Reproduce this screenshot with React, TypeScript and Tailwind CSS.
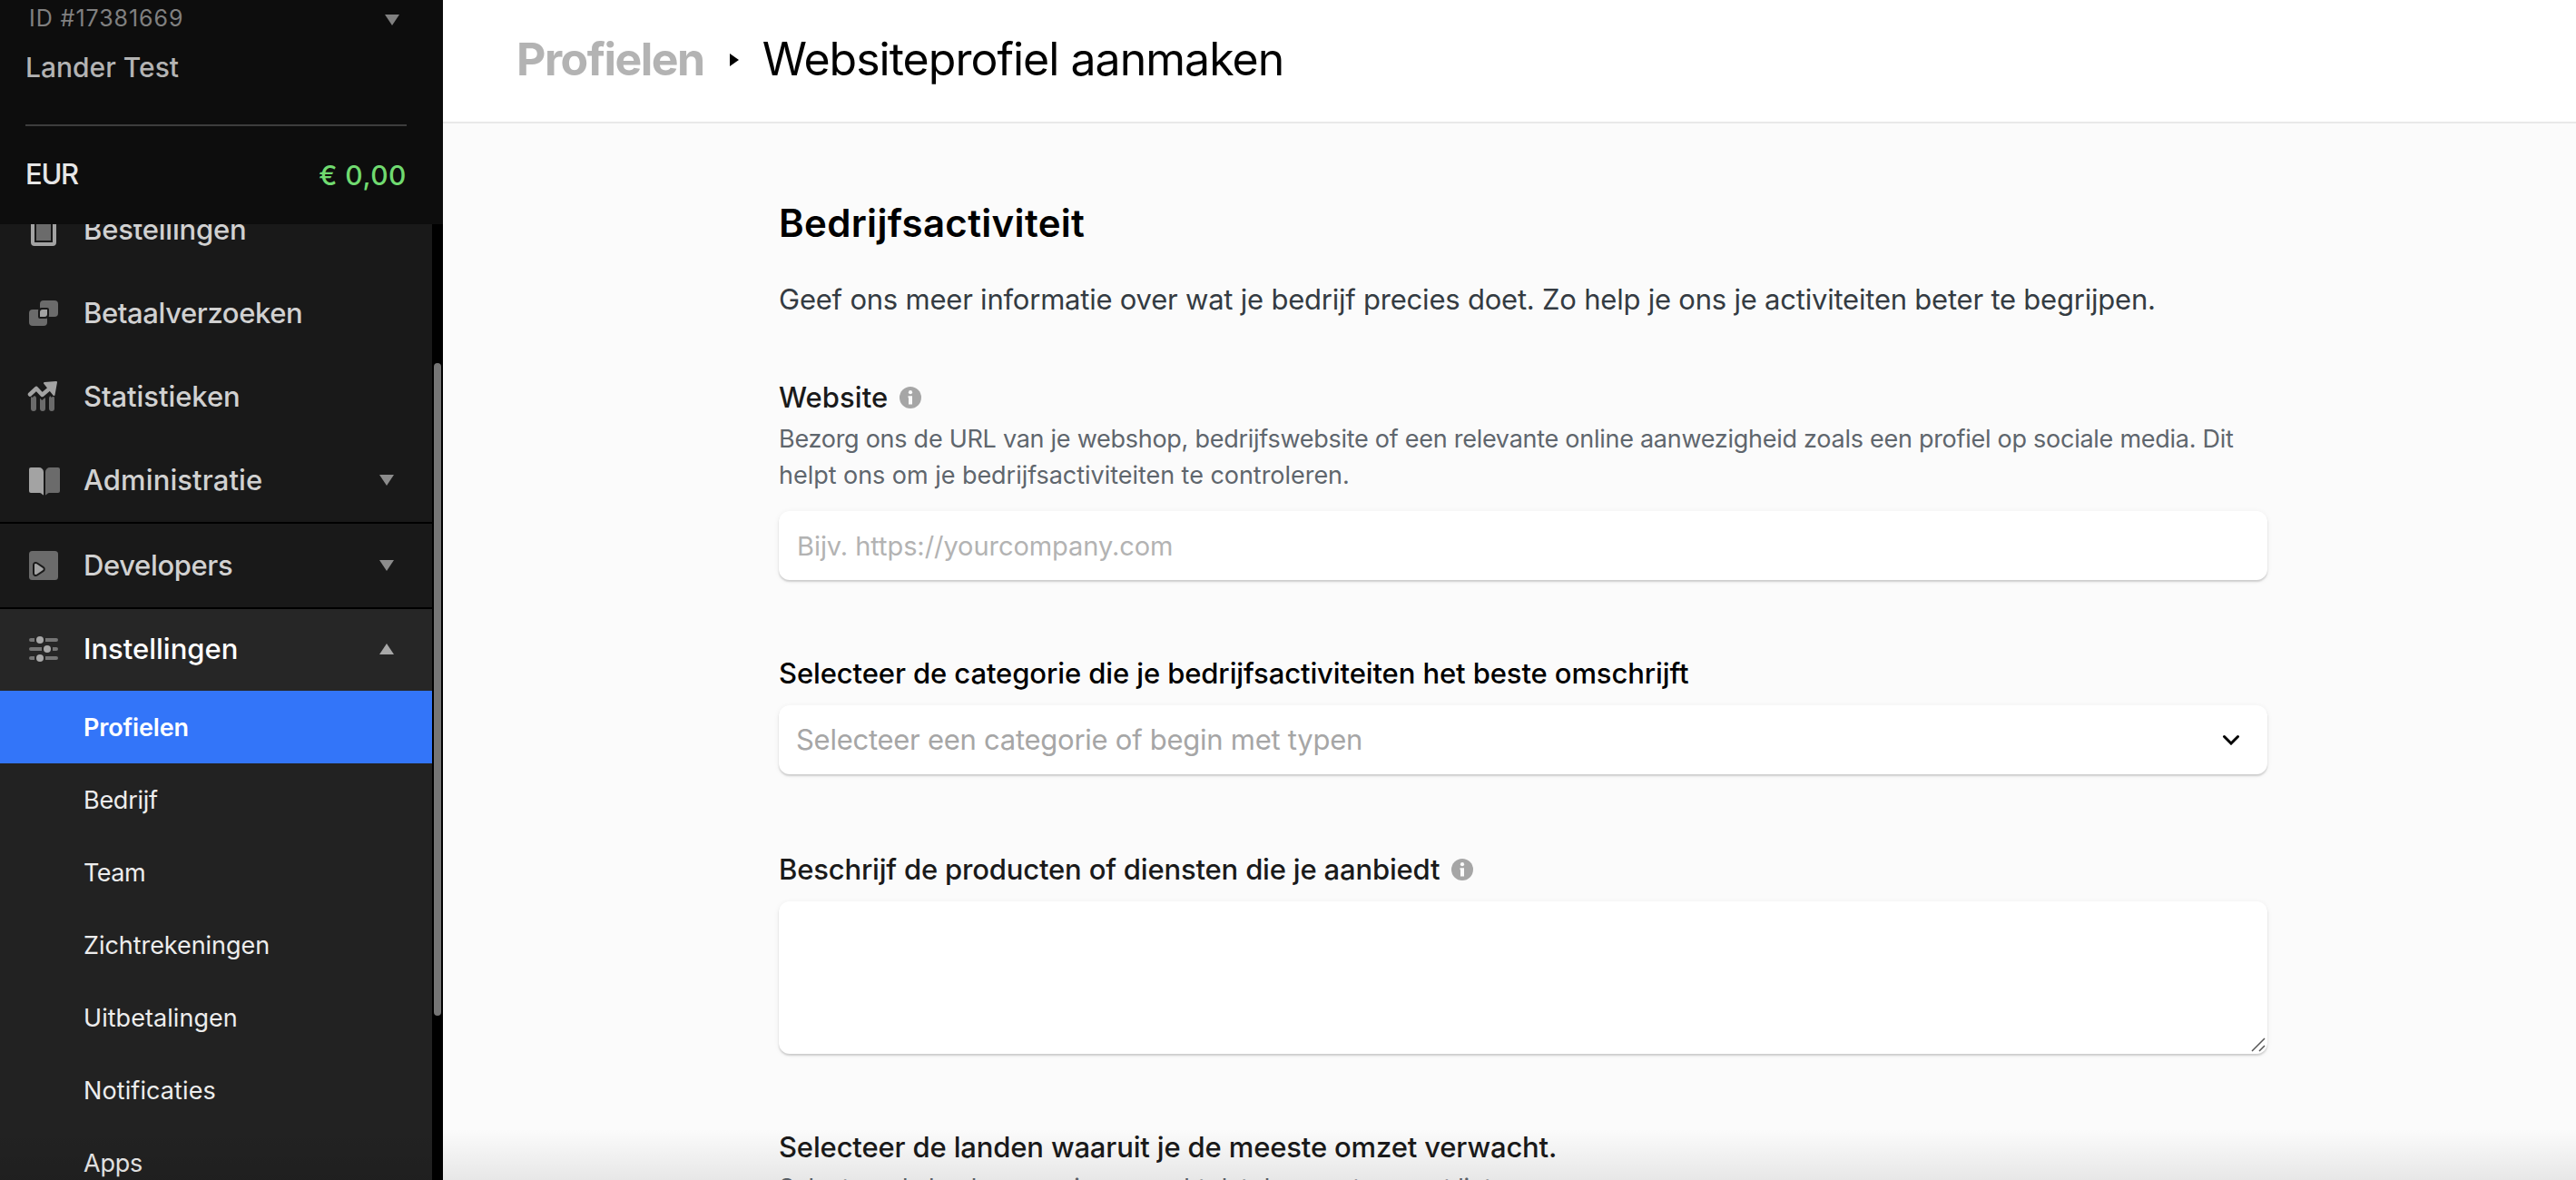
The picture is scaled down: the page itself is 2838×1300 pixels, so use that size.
import React, { FC, ReactNode } from "react";
import clsx from "clsx";

interface NavItem {
  label: string;
  tracking: string;
  icon: ReactNode;
  arrow?: "up" | "down";
}

interface SubItem {
  label: string;
  tracking: string;
  active?: boolean;
}

const OrdersIcon: FC = () => (
  <svg width="40" height="40" viewBox="0 0 40 40" className="shrink-0">
    <rect x="6" y="6" width="24" height="30" rx="2" fill="none" stroke="#a3a3a3" strokeWidth="4" />
    <rect x="10" y="10" width="16" height="22" fill="#6b6b6b" />
  </svg>
);

const RequestsIcon: FC = () => (
  <svg width="40" height="40" viewBox="0 0 40 40" className="shrink-0">
    <rect x="14" y="6" width="20" height="18" rx="4" fill="#6b6b6b" />
    <rect x="2" y="16" width="20" height="18" rx="4" fill="#6b6b6b" />
    <path d="M12 24v-6a4 4 0 0 1 4-4h6a2 2 0 0 1 2 2v6a4 4 0 0 1-4 4h-6a2 2 0 0 1-2-2z" fill="#191919" />
    <path d="M14 24v-5a3 3 0 0 1 3-3h5v5a3 3 0 0 1-3 3z" fill="#a3a3a3" />
  </svg>
);

const StatsIcon: FC = () => (
  <svg width="40" height="40" viewBox="0 0 40 40" className="shrink-0">
    <path d="M7 22v11M17 23v10M27 22v11" stroke="#6b6b6b" strokeWidth="6" strokeLinecap="round" />
    <path d="M3 18l7-6.500 6.500 7L27 9.500l3 10" fill="none" stroke="#191919" strokeWidth="8" />
    <path d="M3 17.500l7-6.500 6.500 7L27 9" fill="none" stroke="#a3a3a3" strokeWidth="4.500" strokeLinecap="round" strokeLinejoin="round" />
    <path d="M19 5l13-1-2.500 14z" fill="#a3a3a3" stroke="#a3a3a3" strokeWidth="2" strokeLinejoin="round" />
  </svg>
);

const BookIcon: FC = () => (
  <svg width="40" height="40" viewBox="0 0 40 40" className="shrink-0">
    <path d="M4 6h9a5 5 0 0 1 5 5v25.500c-1.500 0-2-2.500-4-2.500H4a2 2 0 0 1-2-2V8a2 2 0 0 1 2-2z" fill="#a3a3a3" />
    <path d="M34 6h-9a5 5 0 0 0-5 5v25.500c1.500 0 2-2.500 4-2.500h10a2 2 0 0 0 2-2V8a2 2 0 0 0-2-2z" fill="#6b6b6b" />
  </svg>
);

const DevelopersIcon: FC = () => (
  <svg width="40" height="40" viewBox="0 0 40 40" className="shrink-0">
    <rect x="2" y="4" width="32" height="32" rx="3.500" fill="#6b6b6b" />
    <path
      d="M7 19.500v9c0 2.300 2 3.300 4 2l6.500-4.300c1.700-1.200 1.700-3.200 0-4.400L11 17.500c-2-1.300-4-.3-4 2z"
      fill="#a3a3a3"
      stroke="#191919"
      strokeWidth="2"
    />
  </svg>
);

const SettingsIcon: FC = () => (
  <svg width="40" height="40" viewBox="0 0 40 40" className="shrink-0">
    <path
      d="M4 8h4v4H4a2 2 0 0 1 0-4zM20 8h12a2 2 0 0 1 0 4H20zM4 18h12v4H4a2 2 0 0 1 0-4zM28 18h4a2 2 0 0 1 0 4h-4zM4 28h4v4H4a2 2 0 0 1 0-4zM20 28h12a2 2 0 0 1 0 4H20z"
      fill="#757575"
    />
    <circle cx="14" cy="10" r="4" fill="#a8a8a8" />
    <circle cx="22" cy="20" r="4" fill="#a8a8a8" />
    <circle cx="14" cy="30" r="4" fill="#a8a8a8" />
  </svg>
);

const Arrow: FC<{ direction?: "up" | "down"; className?: string }> = ({ direction = "down", className }) => (
  <svg width="16" height="12" viewBox="0 0 16 12" className={clsx("shrink-0", className)}>
    <path d={direction === "up" ? "M0 12 8 0l8 12z" : "M0 0h16L8 12z"} fill="currentColor" />
  </svg>
);

const InfoIcon: FC = () => (
  <svg width="24" height="24" viewBox="0 0 24 24" className="shrink-0">
    <circle cx="12" cy="12" r="12" fill="#a6a6a6" />
    <circle cx="12" cy="6.200" r="2.100" fill="#fbfbfb" />
    <path d="M9.500 10.200H14V19.500h-4v-7.300h-.5z" fill="#fbfbfb" />
  </svg>
);

const mainItems: NavItem[] = [
  { label: "Bestellingen", tracking: "tracking-[-0.2px]", icon: <OrdersIcon /> },
  { label: "Betaalverzoeken", tracking: "tracking-[-0.39px]", icon: <RequestsIcon /> },
  { label: "Statistieken", tracking: "tracking-[-0.07px]", icon: <StatsIcon /> },
  { label: "Administratie", tracking: "tracking-[0.1px]", icon: <BookIcon />, arrow: "down" },
];

const subItems: SubItem[] = [
  { label: "Profielen", tracking: "tracking-[-0.15px]", active: true },
  { label: "Bedrijf", tracking: "tracking-[-0.27px]" },
  { label: "Team", tracking: "tracking-[-0.49px]" },
  { label: "Zichtrekeningen", tracking: "tracking-[-0.05px]" },
  { label: "Uitbetalingen", tracking: "tracking-[0.05px]" },
  { label: "Notificaties", tracking: "tracking-[0.1px]" },
  { label: "Apps", tracking: "tracking-[-0.23px]" },
];

const NavRow: FC<{ item: NavItem; className?: string; arrowClass?: string }> = ({
  item,
  className,
  arrowClass = "text-[#8c8c8c]",
}) => (
  <a className={clsx("flex shrink-0 items-center pl-[30px] pr-[42px] text-[31px] font-medium", className)}>
    {item.icon}
    <span className={clsx("ml-[22px] flex-1", item.tracking)}>{item.label}</span>
    {item.arrow && <Arrow direction={item.arrow} className={arrowClass} />}
  </a>
);

const Sidebar: FC = () => (
  <aside className="flex h-full w-[488px] shrink-0 flex-col bg-[#0d0d0d]">
    <div className="h-[247px] shrink-0 pl-7 pr-10">
      <div className="flex h-10 items-center justify-between pl-1 pr-2 pt-0.5 text-[25px] text-[#808080]">
        <span className="tracking-[0.94px]">ID #17381669</span>
        <Arrow className="mt-0.5" />
      </div>
      <div className="mt-3.5 h-10 text-[30px] font-medium leading-10 tracking-[0px] text-[#b3b3b3]">Lander Test</div>
      <hr className="mt-[43px] border-t-2 border-[#3d3d3d]" />
      <div className="mt-[33px] flex h-10 items-center justify-between font-medium">
        <span className="text-[31px] tracking-[-1.3px] text-[#e6e6e6]">EUR</span>
        <span className="pt-0.5 text-[30px] tracking-[0.52px] text-[#70da70]">€ 0,00</span>
      </div>
    </div>

    <div className="flex min-h-0 flex-1">
      <nav className="flex w-[476px] flex-col justify-start overflow-hidden bg-[#191919] text-[#d1d1d1]">
        <div className="-mt-10 shrink-0 border-b-2 border-black">
          {mainItems.map((item) => (
            <NavRow key={item.label} item={item} className="h-[92px]" />
          ))}
        </div>
        <NavRow
          item={{ label: "Developers", tracking: "tracking-[-0.37px]", icon: <DevelopersIcon />, arrow: "down" }}
          className="h-[94px] border-b-2 border-black"
        />
        <NavRow
          item={{ label: "Instellingen", tracking: "tracking-[0px]", icon: <SettingsIcon />, arrow: "up" }}
          className="h-[90px] bg-[#262626] pb-0.5 text-white"
          arrowClass="text-[#a8a8a8]"
        />
        {subItems.map((item) => (
          <a
            key={item.label}
            className={clsx(
              "flex h-20 shrink-0 items-center pl-[92px] pt-0.5 text-[27px]",
              item.tracking,
              item.active ? "bg-[#3375f9] font-semibold text-white" : "bg-[#222222] text-[#ededed]"
            )}
          >
            {item.label}
          </a>
        ))}
      </nav>
      <div className="w-3 bg-black px-0.5 pt-[153px]">
        <div className="h-[719px] w-2 rounded-full bg-[#757575]" />
      </div>
    </div>
  </aside>
);

const fieldBox =
  "w-full rounded-xl bg-white shadow-[0_2px_2px_rgba(0,0,0,0.16),0_1px_6px_rgba(0,0,0,0.06)] outline-none";

const Label: FC<{ children: ReactNode; info?: boolean; className?: string }> = ({ children, info, className }) => (
  <label className={clsx("flex h-10 items-center whitespace-nowrap text-[31px] font-medium", className)}>
    {children}
    {info && (
      <span className="ml-[13px]">
        <InfoIcon />
      </span>
    )}
  </label>
);

const ProfileForm: FC = () => (
  <form className="ml-[370px] w-[1640px] pt-[85px]">
    <h2 className="h-[50px] text-[42px] font-semibold leading-[50px] tracking-[0.32px] text-black">
      Bedrijfsactiviteit
    </h2>
    <p className="mt-[35px] h-12 whitespace-nowrap text-[31px] leading-[48px] tracking-[-0.218px] text-[#343b42]">
      Geef ons meer informatie over wat je bedrijf precies doet. Zo help je ons je activiteiten beter te begrijpen.
    </p>

    <Label info className="mt-16 tracking-[0.05px] text-[#1a1a1a]">
      Website
    </Label>
    <div className="mt-1.5 whitespace-nowrap text-[27px] leading-10 text-[#5f666d]">
      <p className="tracking-[-0.269px]">
        Bezorg ons de URL van je webshop, bedrijfswebsite of een relevante online aanwezigheid zoals een profiel op
        sociale media. Dit
      </p>
      <p className="tracking-[-0.037px]">helpt ons om je bedrijfsactiviteiten te controleren.</p>
    </div>
    <input
      className={clsx(
        fieldBox,
        "mt-[19px] block h-[76px] px-5 text-[29px] tracking-[-0.06px] placeholder:text-[#b3b3b3]"
      )}
      placeholder="Bijv. https://yourcompany.com"
    />

    <Label className="mt-[82px] pt-0.5 tracking-[-0.105px] text-black">
      Selecteer de categorie die je bedrijfsactiviteiten het beste omschrijft
    </Label>
    <div className={clsx(fieldBox, "mt-4 flex h-[76px] items-center justify-between pl-[19px] pr-[30px]")}>
      <span className="text-[31px] tracking-[-0.266px] text-[#a6a6a6]">
        Selecteer een categorie of begin met typen
      </span>
      <svg width="20" height="12" viewBox="0 0 20 12">
        <path d="m2.500 2.500 7.500 7.500 7.500-7.500" fill="none" stroke="#000" strokeWidth="3" strokeLinecap="round" />
      </svg>
    </div>

    <Label info className="mt-[84px] pt-0.5 tracking-[-0.181px] text-[#1a1a1a]">
      Beschrijf de producten of diensten die je aanbiedt
    </Label>
    <div className={clsx(fieldBox, "mt-4 flex h-[168px] items-end justify-end p-0.5")}>
      <svg width="16" height="16" viewBox="0 0 16 16">
        <path d="M1 15 15 1M9 15l6-6" fill="none" stroke="#555" strokeWidth="1.500" />
      </svg>
    </div>

    <Label className="mt-[82px] pt-0.5 tracking-[-0.157px] text-[#1a1a1a]">
      Selecteer de landen waaruit je de meeste omzet verwacht.
    </Label>
    <p className="mt-1.5 whitespace-nowrap text-[27px] leading-10 tracking-[-0.27px] text-[#5f666d]">
      Selecteer de landen waar je verwacht dat de meeste omzet ligt
    </p>
  </form>
);

const App: FC = () => {
  return (
    <div className="relative flex h-[1300px] w-[2838px] overflow-hidden bg-[#fbfbfb] font-['Inter',sans-serif]">
      <Sidebar />
      <main className="min-w-0 flex-1">
        <header className="flex h-[136px] items-center border-b-2 border-[#e9e9e9] bg-white pb-[3px] pl-[81px] text-[50px]">
          <a className="font-bold tracking-[-1.52px] text-[#b3b3b3]">Profielen</a>
          <svg width="10" height="14" viewBox="0 0 10 14" className="ml-7">
            <path d="M0 0v14l10-7z" fill="#000" />
          </svg>
          <h1 className="ml-[26px] tracking-[-0.98px] text-black">Websiteprofiel aanmaken</h1>
        </header>
        <ProfileForm />
      </main>
      {/* fade along the bottom edge */}
      <div className="pointer-events-none absolute inset-x-0 bottom-0 h-14 bg-linear-to-b from-transparent to-black/8" />
    </div>
  );
};

export default App;
